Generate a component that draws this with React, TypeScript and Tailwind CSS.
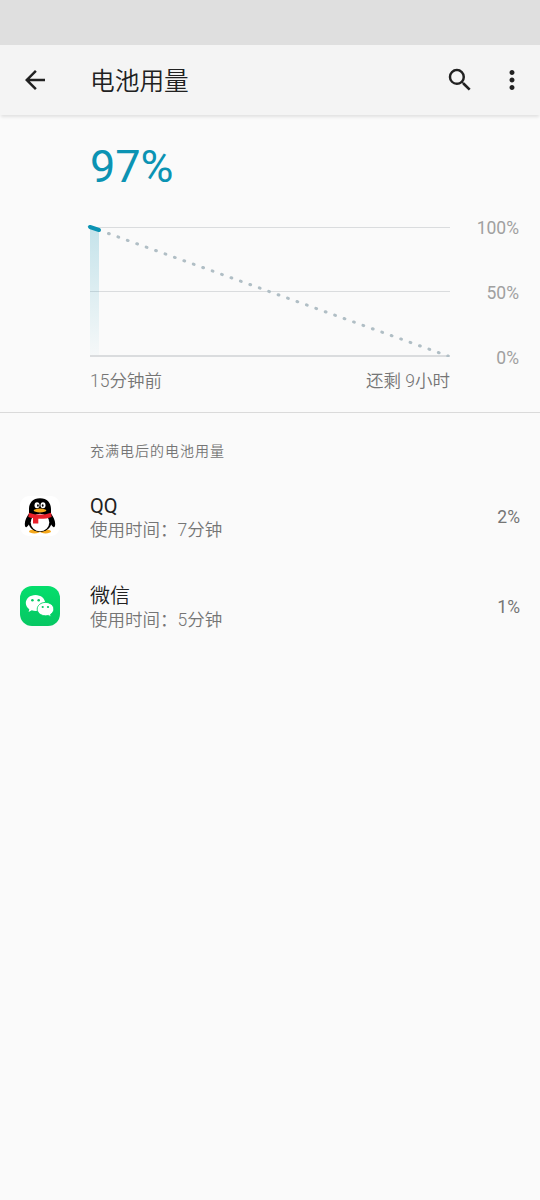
import { MdArrowBack, MdMoreVert, MdSearch } from "react-icons/md";

type AppUsage = {
  name: string;
  time: string;
  percent: string;
  icon: React.ReactNode;
};

const QQIcon = () => (
  <svg viewBox="0 0 40 40" className="h-10 w-10">
    <rect width="40" height="40" rx="9" fill="#fff" />
    <ellipse cx="14.500" cy="35.4" rx="5.500" ry="2" fill="#f5a81c" />
    <ellipse cx="25.500" cy="35.4" rx="5.500" ry="2" fill="#f5a81c" />
    <path
      d="M20 2.300C12.8 2.300 9 7 9 13v4.500C6.800 21 4.800 24 4.800 28c0 2.300.8 3.500 1.500 3.200.8-.3 1.700-1.500 2.500-2.700C10.300 33 14.500 35.800 20 35.800S29.700 33 31.200 28.500c.8 1.200 1.700 2.400 2.500 2.700.7.3 1.500-.9 1.500-3.200 0-4-2-7-4.200-10.500V13C31 7 27.200 2.300 20 2.300z"
      fill="#000"
    />
    <ellipse cx="20" cy="26.500" rx="9.300" ry="8.700" fill="#fff" />
    <path
      d="M9 16.700c3.300 1.300 7 1.800 11 1.800s7.700-.5 11-1.800l.7 4.300c-3.400 1.300-7.100 1.800-11.700 1.800h-1.700v4.700h-5.300v-5.400c-1.700-.2-3.200-.6-4.700-1.100z"
      fill="#e8202a"
    />
    <ellipse cx="17" cy="9.300" rx="2.500" ry="3" fill="#fff" />
    <ellipse cx="23" cy="9.300" rx="2.500" ry="3" fill="#fff" />
    <ellipse cx="17.900" cy="9.500" rx="0.900" ry="1.200" fill="#000" />
    <ellipse cx="22.700" cy="9.500" rx="0.900" ry="1.200" fill="#000" />
    <ellipse cx="20" cy="14.500" rx="6.300" ry="1.900" fill="#f5a81c" />
  </svg>
);

const WeChatIcon = () => (
  <svg viewBox="0 0 40 40" className="h-10 w-10">
    <defs>
      <linearGradient id="wechat" x1="0" y1="0" x2="0" y2="1">
        <stop offset="0" stopColor="#04de6c" />
        <stop offset="1" stopColor="#07c763" />
      </linearGradient>
    </defs>
    <rect width="40" height="40" rx="12" fill="url(#wechat)" />
    <path
      d="M15.500 9C10 9 5.800 12.600 5.800 17c0 2.500 1.400 4.700 3.500 6.200L8.600 26l3.200-1.700c1.200.4 2.400.6 3.700.6 5.400 0 9.700-3.500 9.700-7.900S20.900 9 15.500 9z"
      fill="#fff"
    />
    <path
      d="M25.500 16.400c-4.600 0-8.300 3-8.300 6.700s3.700 6.700 8.300 6.700c1 0 2-.2 2.900-.4l2.800 1.500-.7-2.500c2-1.200 3.300-3.100 3.300-5.300 0-3.700-3.700-6.700-8.300-6.700z"
      fill="#fff"
      stroke="#05d268"
      strokeWidth="0.900"
    />
    <circle cx="12.400" cy="14.300" r="1.300" fill="#05c965" />
    <circle cx="18.700" cy="14.300" r="1.300" fill="#05c965" />
    <circle cx="22.700" cy="21" r="1.100" fill="#05c965" />
    <circle cx="28" cy="21" r="1.100" fill="#05c965" />
  </svg>
);

const apps: AppUsage[] = [
  { name: "QQ", time: "使用时间：7分钟", percent: "2%", icon: <QQIcon /> },
  { name: "微信", time: "使用时间：5分钟", percent: "1%", icon: <WeChatIcon /> },
];

const UsageChart = () => (
  <svg
    viewBox="0 0 364 134"
    className="-ml-1 h-[134px] w-[364px]"
    fill="none"
  >
    <defs>
      <linearGradient id="level" x1="0" y1="0" x2="0" y2="1">
        <stop offset="0" stopColor="#0891b2" stopOpacity="0.22" />
        <stop offset="1" stopColor="#0891b2" stopOpacity="0.020" />
      </linearGradient>
    </defs>
    <path d="M4 4.500h360M4 68.500h360" stroke="#dadcde" />
    <path d="M4 133h360" stroke="#dadcde" strokeWidth="2" />
    <path d="M4 4l9 3v125H4z" fill="url(#level)" />
    <path
      d="M22.500 10.500L362 133"
      stroke="#b0bec5"
      strokeWidth="3"
      strokeLinecap="round"
      strokeDasharray="0.800 9.220"
    />
    <path
      d="M4 4l9 3"
      stroke="#0b93b3"
      strokeWidth="4"
      strokeLinecap="round"
    />
  </svg>
);

export default function App() {
  return (
    <div className="min-h-[1200px] w-[540px] bg-[#fafafa] font-['Roboto','Noto_Sans_CJK_SC',sans-serif] text-[#757575]">
      <div className="h-[45px] bg-[#dfdfdf]" />
      <header className="flex h-[70px] items-center bg-[#f4f4f4] pr-[13px] pl-5 text-[#212121] shadow-[0_3px_3px_-1px_rgba(0,0,0,0.1)]">
        <button aria-label="返回">
          <MdArrowBack className="h-[30px] w-[30px]" />
        </button>
        <h1 className="ml-10 grow pt-[3px] text-[24.7px] leading-[30px] font-[350]">
          电池用量
        </h1>
        <button aria-label="搜索" className="mr-[22px]">
          <MdSearch className="h-[30px] w-[30px]" />
        </button>
        <button aria-label="更多">
          <MdMoreVert className="h-[30px] w-[30px]" />
        </button>
      </header>

      <section className="h-[298px] border-b border-[#dadada] pr-5 pl-[90px]">
        <p className="pt-[26px] text-[45px] leading-[52px] text-[#0b93b3]">
          97%
        </p>
        <div className="mt-[30px] flex justify-between">
          <UsageChart />
          <div className="-mt-[5px] -mb-[11px] flex flex-col justify-between pr-px text-right text-[17.5px] leading-5 text-[#a0a0a0]">
            <span>100%</span>
            <span>50%</span>
            <span>0%</span>
          </div>
        </div>
        <div className="mt-[14px] flex w-[360px] justify-between text-[17.5px] leading-5 font-[350]">
          <span>15分钟前</span>
          <span className="-ml-px">还剩 9小时</span>
        </div>
      </section>

      <h2 className="pt-[28px] pl-[90px] text-[14px] leading-5 font-[350] tracking-[1px]">
        充满电后的电池用量
      </h2>
      <ul className="mt-[10px]">
        {apps.map((app) => (
          <li key={app.name} className="flex h-[90px] items-center px-5">
            {app.icon}
            <div className="ml-[30px] grow pt-[5px]">
              <p className="-mt-px text-[20px] leading-6 font-[350] text-[#212121]">
                {app.name === "QQ" ? (
                  <span className="font-normal">{app.name}</span>
                ) : (
                  app.name
                )}
              </p>
              <p className="text-[17.5px] leading-6 font-[350]">{app.time}</p>
            </div>
            <span className="pt-[3px] text-[17.5px]">{app.percent}</span>
          </li>
        ))}
      </ul>
    </div>
  );
}
